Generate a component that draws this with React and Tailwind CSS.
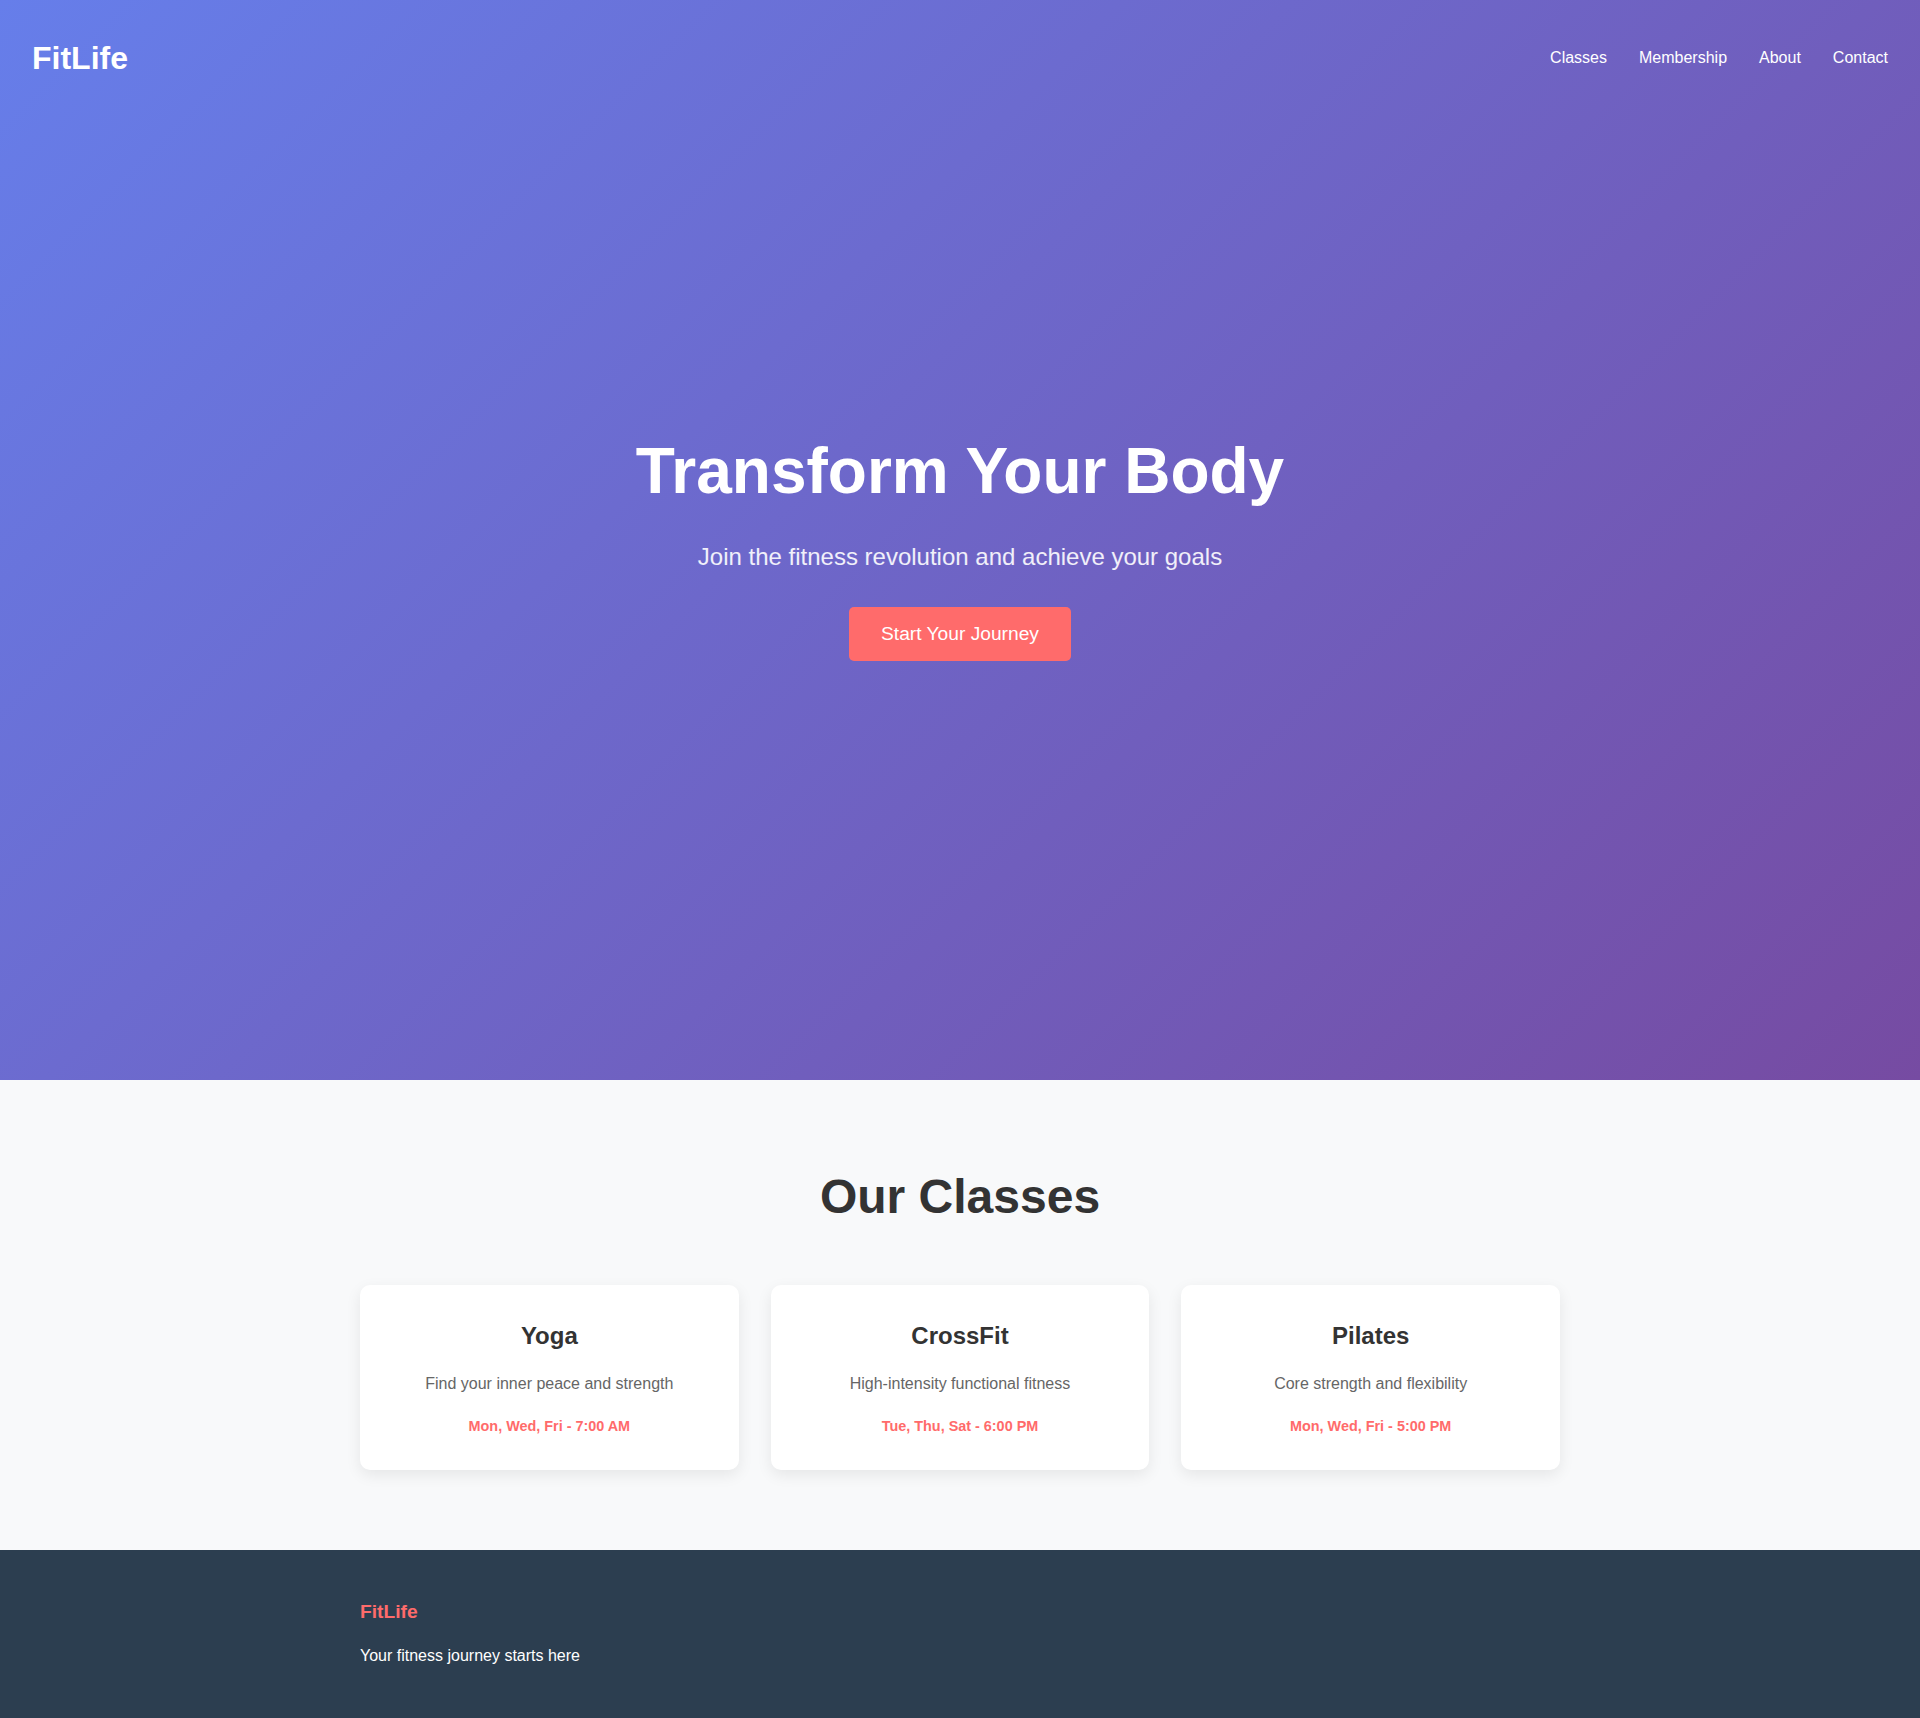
import React from 'react';

const classes = [
  { name: 'Yoga', desc: 'Find your inner peace and strength', time: 'Mon, Wed, Fri - 7:00 AM' },
  { name: 'CrossFit', desc: 'High-intensity functional fitness', time: 'Tue, Thu, Sat - 6:00 PM' },
  { name: 'Pilates', desc: 'Core strength and flexibility', time: 'Mon, Wed, Fri - 5:00 PM' },
];

const navLinks = ['Classes', 'Membership', 'About', 'Contact'];

const ClassCard = ({ name, desc, time }) => (
  <div className="bg-white rounded-[10px] shadow-[0_5px_15px_rgba(0,0,0,0.08)] pt-[33px] pb-8 px-8 text-center">
    <h3 className="text-[24px] leading-[36px] font-bold text-[#333] mb-[18px]">{name}</h3>
    <p className="text-[16px] leading-[24px] text-[#666] mb-5">{desc}</p>
    <p className="text-[14.4px] leading-[21.6px] font-bold text-[#ff6b6b]">{time}</p>
  </div>
);

export default function App() {
  return (
    <div className="font-['Liberation_Sans',Arial,sans-serif] text-[#333]">
      {/* Hero */}
      <section className="relative h-[1080px] pt-[14px] bg-[linear-gradient(135deg,#667eea_0%,#764ba2_100%)] flex items-center justify-center text-white">
        <header className="absolute top-0 inset-x-0 h-[116px] px-8 flex items-center justify-between">
          <div className="text-[32px] leading-[1.15] font-bold">FitLife</div>
          <nav className="flex items-center gap-8 text-[16px]">
            {navLinks.map((l) => (
              <a key={l} href="#" className="text-white">{l}</a>
            ))}
          </nav>
        </header>

        <div className="text-center">
          <h1 className="text-[64px] leading-[1.2] font-bold mb-[30px]">Transform Your Body</h1>
          <p className="text-[24px] leading-[36px] text-white/90 mb-8">Join the fitness revolution and achieve your goals</p>
          <button className="bg-[#ff6b6b] text-white text-[19.2px] leading-[1.15] px-8 py-4 rounded-[5px]">
            Start Your Journey
          </button>
        </div>
      </section>

      {/* Classes */}
      <section className="bg-[#f8f9fa] pt-[81px] pb-20">
        <div className="max-w-[1200px] mx-auto">
          <h2 className="text-[48px] leading-[72px] font-bold text-[#333] text-center mb-[52px]">Our Classes</h2>
          <div className="grid grid-cols-3 gap-8">
            {classes.map((c) => (
              <ClassCard key={c.name} {...c} />
            ))}
          </div>
        </div>
      </section>

      {/* Footer */}
      <footer className="bg-[#2c3e50] text-white pt-12 pb-[50px]">
        <div className="max-w-[1200px] mx-auto">
          <div className="text-[19.2px] leading-[28.8px] font-bold text-[#ff6b6b] mb-[18px]">FitLife</div>
          <p className="text-[16px] leading-[24px]">Your fitness journey starts here</p>
        </div>
      </footer>
    </div>
  );
}
